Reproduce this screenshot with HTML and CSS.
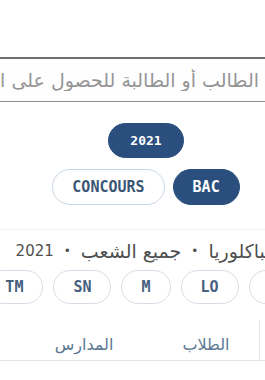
FILE: index.html
```html
<!DOCTYPE html>
<html lang="ar">
<head>
<meta charset="utf-8">
<link rel="stylesheet" href="styles.css">
</head>
<body>
<div class="page">
  <div class="search">
    <input class="search-input" type="text" placeholder="الطالب أو الطالبة للحصول على النتيجة">
  </div>
  <div class="years">
    <span class="pill pill-active pill-year">2021</span>
  </div>
  <div class="types">
    <span class="pill pill-active">BAC</span>
    <span class="pill">CONCOURS</span>
  </div>
  <div class="divider"></div>
  <h2 class="subtitle"><span class="ar">الباكلوريا</span><span class="dot">•</span><span class="ar">جميع الشعب</span><span class="dot">•</span><span class="num">2021</span></h2>
  <div class="chips">
    <span class="chip">LM</span>
    <span class="chip">LO</span>
    <span class="chip">M</span>
    <span class="chip">SN</span>
    <span class="chip">TM</span>
  </div>
  <div class="tabs">
    <div class="tab-edge"></div>
    <div class="tab tab-students">الطلاب</div>
    <div class="tab tab-schools">المدارس</div>
  </div>
</div>
</body>
</html>
```

FILE: styles.css
```css
html, body {
  margin: 0;
  padding: 0;
  background: #ffffff;
  overflow: hidden;
}

body {
  width: 265px;
  height: 380px;
}

.page {
  width: 292px;
  direction: rtl;
  padding-top: 57px;
  font-family: "DejaVu Sans", "Noto Sans", sans-serif;
}

.search {
  display: flex;
  justify-content: flex-start;
  margin-right: 24px;
}

.search-input {
  flex: none;
  width: 300px;
  height: 45px;
  box-sizing: border-box;
  border: 1px solid #8c8c8c;
  border-top: 2px solid #707070;
  border-radius: 0;
  padding: 0 8px 0 0;
  margin: 0;
  background: #fefefe;
  direction: rtl;
  text-align: right;
  font-family: "DejaVu Sans", sans-serif;
  font-size: 19px;
  color: #555;
  outline: none;
}

.search-input::placeholder {
  color: #959595;
}

.years {
  display: flex;
  justify-content: center;
  margin-top: 21px;
}

.types {
  display: flex;
  justify-content: center;
  gap: 8px;
  margin-top: 11px;
}

.pill {
  display: inline-flex;
  align-items: center;
  justify-content: center;
  height: 36px;
  box-sizing: border-box;
  padding: 0 19px;
  border: 1px solid #c9d6e2;
  border-radius: 18px;
  background: #ffffff;
  color: #3b5675;
  font-family: "DejaVu Sans Mono", monospace;
  font-weight: bold;
  font-size: 15px;
  direction: ltr;
}

.pill-active {
  background: #2a4f7e;
  border-color: #2a4f7e;
  color: #ffffff;
}

.pill-year {
  height: 35px;
  padding: 0 21px;
  font-size: 13px;
}

.divider {
  margin-top: 24px;
  border-top: 1px solid #f2f2f2;
}

.subtitle {
  margin: 10px 0 0;
  height: 22px;
  display: flex;
  align-items: center;
  justify-content: center;
  gap: 10px;
  white-space: nowrap;
  font-family: "DejaVu Sans", sans-serif;
  font-weight: normal;
  font-size: 14px;
  line-height: 22px;
  color: #4f4f4f;
}

.subtitle .ar {
  font-size: 19px;
}

.subtitle .num {
  font-size: 15px;
}

.subtitle .dot {
  font-size: 12px;
}

.chips {
  display: flex;
  justify-content: center;
  gap: 10px;
  margin-top: 8px;
}

.chip {
  flex: none;
  display: inline-flex;
  align-items: center;
  justify-content: center;
  height: 34px;
  box-sizing: border-box;
  padding: 0 19px;
  border: 1px solid #d5dde6;
  border-radius: 17px;
  color: #46607e;
  font-family: "DejaVu Sans Mono", monospace;
  font-weight: bold;
  font-size: 15px;
  direction: ltr;
}

.tabs {
  display: flex;
  margin-top: 16px;
  height: 40px;
  border-bottom: 1px solid #e4e4e4;
}

.tab-edge {
  flex: none;
  width: 32px;
  border-left: 1px solid #e6e6e6;
}

.tab {
  flex: none;
  display: flex;
  align-items: center;
  justify-content: center;
  box-sizing: border-box;
  padding-top: 8px;
  font-family: "DejaVu Sans", sans-serif;
  font-size: 16px;
  color: #5b7893;
}

.tab-students {
  width: 106px;
}

.tab-schools {
  width: 138px;
}
```
